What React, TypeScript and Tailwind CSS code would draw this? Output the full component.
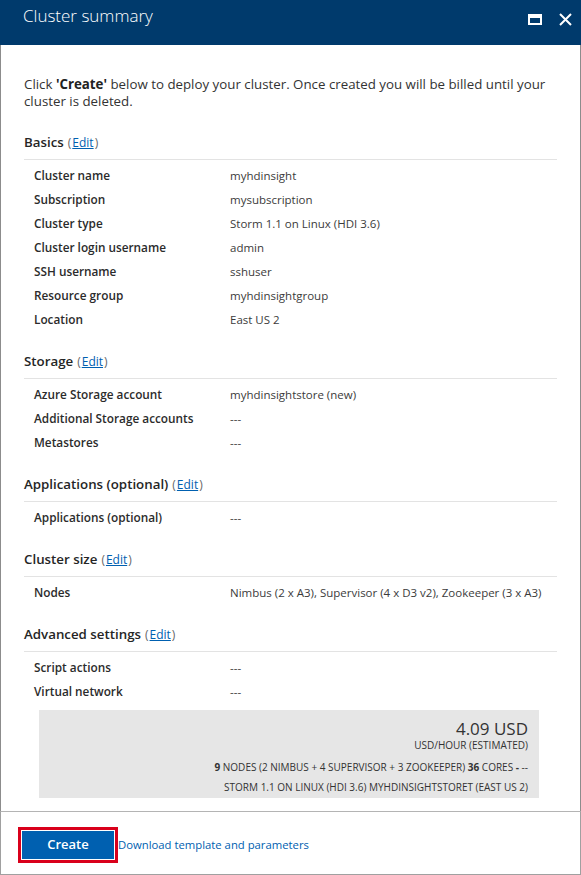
import React from "react"

type Row = { label: string; value: string }
type Section = { title: string; rows: Row[] }

const sections: Section[] = [
  {
    title: "Basics",
    rows: [
      { label: "Cluster name", value: "myhdinsight" },
      { label: "Subscription", value: "mysubscription" },
      { label: "Cluster type", value: "Storm 1.1 on Linux (HDI 3.6)" },
      { label: "Cluster login username", value: "admin" },
      { label: "SSH username", value: "sshuser" },
      { label: "Resource group", value: "myhdinsightgroup" },
      { label: "Location", value: "East US 2" },
    ],
  },
  {
    title: "Storage",
    rows: [
      { label: "Azure Storage account", value: "myhdinsightstore (new)" },
      { label: "Additional Storage accounts", value: "---" },
      { label: "Metastores", value: "---" },
    ],
  },
  {
    title: "Applications (optional)",
    rows: [{ label: "Applications (optional)", value: "---" }],
  },
  {
    title: "Cluster size",
    rows: [{ label: "Nodes", value: "Nimbus (2 x A3), Supervisor (4 x D3 v2), Zookeeper (3 x A3)" }],
  },
  {
    title: "Advanced settings",
    rows: [
      { label: "Script actions", value: "---" },
      { label: "Virtual network", value: "---" },
    ],
  },
]

function SummarySection({ section, first }: { section: Section; first: boolean }) {
  return (
    <div className={first ? "mt-[22px]" : "mt-[19px]"}>
      <div className="h-[20px] pt-[2px] flex items-center">
        <span className="text-[13.3px] font-semibold text-[#252525]">{section.title}</span>
        <span className="ml-[4px] text-[12px] text-[#666]">
          (<a className="text-[#0060b0] underline mx-[1px]">Edit</a>)
        </span>
      </div>
      <div className="mt-[7px] border-t border-[#e3e3e3] pt-[4px]">
        {section.rows.map((row) => (
          <div key={row.label} className="h-[24px] flex items-center">
            <span className="w-[206px] pl-[10px] text-[11.8px] font-semibold text-[#2b2b2b]">{row.label}</span>
            <span className="text-[11.5px] text-[#3b3b3b]">{row.value}</span>
          </div>
        ))}
      </div>
    </div>
  )
}

export default function App() {
  return (
    <div className="w-[581px] h-[875px] flex flex-col bg-white font-['Open_Sans',sans-serif]">
      <div className="h-[45px] shrink-0 bg-[#003a6c] flex items-center pl-[23px] pr-[9px]">
        <h1 className="text-[17px] font-light text-white flex-1 -mt-[13px]">Cluster summary</h1>
        <div className="flex items-center gap-[17px] -mt-[6px]">
          <svg width="14" height="11" viewBox="0 0 14 11">
            <rect x="1" y="1.5" width="12" height="8.5" fill="none" stroke="white" strokeWidth="2" />
            <rect x="0" y="0" width="14" height="4" fill="white" />
          </svg>
          <svg width="13" height="13" viewBox="0 0 13 13">
            <path d="M1 1 L12 12 M12 1 L1 12" stroke="white" strokeWidth="2" />
          </svg>
        </div>
      </div>

      <div className="flex-1 border-x border-[#8c8c8c] px-[23px] pt-[31px]">
        <p className="text-[13.3px] leading-[17px] text-[#333]">
          Click <b className="text-[#222]">'Create'</b> below to deploy your cluster. Once created you will be billed until your
          <br />
          cluster is deleted.
        </p>

        {sections.map((s, i) => (
          <SummarySection key={s.title} section={s} first={i === 0} />
        ))}

        <div className="mt-[6px] ml-[15px] w-[500px] h-[88px] bg-[#e6e6e6] text-right pr-[11px] pt-[9px] text-[#333]">
          <div className="text-[17px] leading-[20px]">4.09 USD</div>
          <div className="text-[10px] leading-[13px]">USD/HOUR (ESTIMATED)</div>
          <div className="text-[10px] leading-[13px] mt-[9px]">
            <b>9</b> NODES (2 NIMBUS + 4 SUPERVISOR + 3 ZOOKEEPER) <b>36</b> CORES <b>-</b> --
          </div>
          <div className="text-[10px] leading-[13px] mt-[7px]">
            STORM 1.1 ON LINUX (HDI 3.6) MYHDINSIGHTSTORET (EAST US 2)
          </div>
        </div>
      </div>

      <div className="h-[64px] shrink-0 border border-t border-[#a0a0a0] border-t-[#b4b4b4] flex items-center pl-[17px]">
        <div className="border-[3px] border-[#d9001b] p-[1px] mt-[4px]">
          <button className="w-[92px] h-[28px] bg-[#0060b0] text-white text-[13px] font-semibold">Create</button>
        </div>
        <a className="mt-[4px] text-[11.3px] text-[#0060b0]">Download template and parameters</a>
      </div>
    </div>
  )
}
